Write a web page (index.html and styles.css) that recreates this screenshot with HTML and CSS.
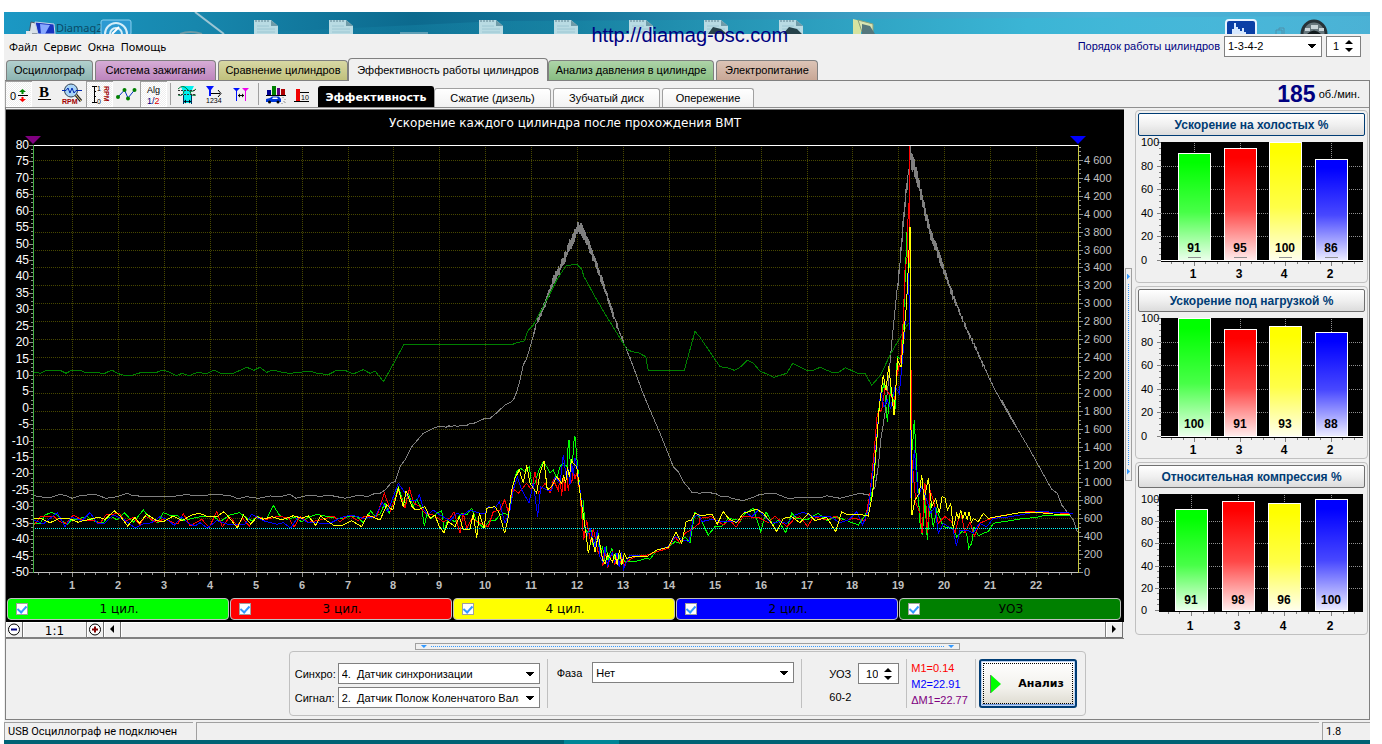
FILE: index.html
```html
<!DOCTYPE html>
<html lang="ru">
<head>
<meta charset="utf-8">
<title>Diamag</title>
<link rel="stylesheet" href="styles.css">
</head>
<body>
<div class="desktop">
  <svg class="desktop-art" viewBox="4 12 1366 22" aria-hidden="true">
    <defs>
      <linearGradient id="sky"><stop offset="0" stop-color="#1b98c4"/><stop offset=".14" stop-color="#1787ad"/><stop offset=".3" stop-color="#0c6a8e"/><stop offset=".42" stop-color="#17779c"/><stop offset=".62" stop-color="#3a9dc2"/><stop offset=".8" stop-color="#49b4d8"/><stop offset="1" stop-color="#49abd0"/></linearGradient>
      <linearGradient id="glow"><stop offset="0" stop-color="#1a93b8" stop-opacity="0"/><stop offset=".3" stop-color="#1789a6" stop-opacity=".6"/><stop offset=".7" stop-color="#3bb5d5"/><stop offset="1" stop-color="#4fc0e0" stop-opacity=".3"/></linearGradient>
      <g id="doc"><path d="M0 34V20H17L24 26V34Z" fill="#b9dbe3"/><path d="M17 20L24 26H17Z" fill="#6f9ba8"/><path d="M2 20v2M5 20v2M8 20v2M11 20v2M14 20v2" stroke="#5f8290"/><path d="M3 26H15M3 29H21M3 32H21" stroke="#9cc6d2"/></g>
    </defs>
    <rect x="4" y="12" width="1366" height="22" fill="url(#sky)"/>
    <path d="M230 34L500 21L1370 16V34Z" fill="url(#glow)"/>
    <path d="M195 12L224 34" stroke="#9dc6d4" stroke-width="2"/>
    <path d="M180 34Q190 30 202 34" stroke="#6e9aa6" fill="none" stroke-width="2"/>
    <text x="56" y="32" class="desktop-caption">Diamag2</text>
    <path d="M31 22L40 24V34H29Z" fill="#d8e0e8" stroke="#4a5662"/><path d="M35 22L54 24L55 34H38Z" fill="#1833c0" stroke="#c9d6ea"/><path d="M40 24L50 25L45 34H41Z" fill="#88a8ff"/><path d="M26 31h6v3h-6z" fill="#dfe6ea"/>
    <rect x="101" y="20" width="30" height="15" rx="2" fill="#2c9ad2" stroke="#8ad0ee"/><circle cx="116" cy="34" r="11" fill="none" stroke="#d6eef8" stroke-width="2"/><circle cx="116" cy="34" r="6" fill="none" stroke="#d6eef8" stroke-width="2"/><path d="M112 34L119 27" stroke="#fff" stroke-width="2"/>
    <use href="#doc" x="254"/><use href="#doc" x="329"/><path d="M400 32h28v2h-28z" fill="#5d9fb6"/>
    <use href="#doc" x="479"/><use href="#doc" x="554"/><use href="#doc" x="629"/><use href="#doc" x="704"/><use href="#doc" x="779"/>
    <path d="M708 34L713 27L721 29L727 34ZM783 34L789 27L797 29L802 34Z" fill="#26424a"/>
    <path d="M853 19L861 21V34H853Z" fill="#d7e3a0"/><path d="M858 20L873 24V32H862Z" fill="#d9e4b2" stroke="#8aa17c"/><path d="M862 24L870 26L875 34H862Z" fill="#55777c"/>
    <rect x="1226" y="20" width="30" height="18" rx="3" fill="#0b3fa6" stroke="#e9f4ff" stroke-width="2"/><path d="M1233 34V29M1235 34V23M1237 34V27M1239 34V29M1241 34V31M1243 34V28M1245 34V32" stroke="#d6e8ff" stroke-width="2"/>
    <path d="M1276 34V30H1282V34M1279 30V28H1284V34" stroke="#4f91ac" fill="none"/>
    <path d="M1302 34A12 13 0 0 1 1326 34" fill="#67777d" stroke="#263238" stroke-width="3"/><path d="M1305 28h5v3h-5zM1311 25h7v4h-7zM1319 28h5v3h-5z" fill="#c8d4d8"/><path d="M1307 34Q1314 27 1321 34Z" fill="#111a1d"/>
  </svg>
  <a class="site-link" href="http://diamag-osc.com">http://diamag-osc.com</a>
</div>

<div class="window">
  <header class="menubar">
    <nav class="menus"><button>Файл</button><button>Сервис</button><button>Окна</button><button>Помощь</button></nav>
    <div class="order">
      <label for="order">Порядок работы цилиндров</label>
      <select id="order" class="field order-select"><option>1-3-4-2</option></select>
      <span class="field spin"><input id="first" type="number" value="1" aria-label="Первый цилиндр"><svg viewBox="0 0 8 14" aria-hidden="true"><path d="M0 5L4 1L8 5ZM0 9L4 13L8 9Z"/></svg></span>
    </div>
  </header>

  <nav class="tabs">
    <button class="tab tab-scope">Осциллограф</button>
    <button class="tab tab-ignition">Система зажигания</button>
    <button class="tab tab-compare">Сравнение цилиндров</button>
    <button class="tab tab-active">Эффективность работы цилиндров</button>
    <button class="tab tab-pressure">Анализ давления в цилиндре</button>
    <button class="tab tab-power">Электропитание</button>
  </nav>

  <main class="page">
    <div class="toolbar">
      <div class="tools">
        <button class="tool pressed" aria-label="Сдвиг нуля"><svg viewBox="0 0 27 26"><text x="5" y="19" class="ic-text">0</text><path d="M17.500 8L21 11H18.500V13H16.500V11H14Z" fill="#080"/><path d="M13 14.500H23" stroke="#000"/><path d="M17.500 21L21 18H18.500V16H16.500V18H14Z" fill="red"/></svg></button>
        <button class="tool" aria-label="Жирные линии"><svg viewBox="0 0 27 26"><text x="7" y="16" class="ic-serif">B</text><path d="M6 18.500H19" stroke="#000"/></svg></button>
        <button class="tool" aria-label="Обороты"><svg viewBox="0 0 27 26"><circle cx="12" cy="9.500" r="6.500" fill="#a8d4f8" stroke="#345"/><path d="M3 9.500H7L9 7L11 12L13 7L15 12L17 9.500H23" fill="none" stroke="#0028b0"/><path d="M17 14L22 20" stroke="#222" stroke-width="3"/><path d="M17 14L22 20" stroke="#e8d080"/><text x="3" y="23" class="ic-rpm">RPM</text></svg></button>
        <button class="tool pressed" aria-label="Шкала оборотов"><svg viewBox="0 0 27 26"><path d="M6 5.500H11M8.500 5V22M6 21.500H11M8 10.500H10M8 15.500H10" stroke="#000" fill="none"/><text x="11" y="10" class="ic-tiny">1</text><text x="11" y="23" class="ic-tiny">0</text><text class="ic-rpm" transform="translate(18 5) rotate(90)">RPM</text></svg></button>
        <button class="tool" aria-label="Точки"><svg viewBox="0 0 27 26"><path d="M5 16L11.500 9L15 17L21.500 9" fill="none" stroke="#0030c0"/><g fill="#008000"><circle cx="5" cy="16" r="2"/><circle cx="11.500" cy="9" r="2"/><circle cx="15" cy="17.500" r="2"/><circle cx="21.500" cy="9" r="2"/></g></svg></button>
        <button class="tool pressed" aria-label="Алгоритм"><svg viewBox="0 0 27 26"><text x="7" y="12" class="ic-alg">Alg</text><text x="7" y="23" class="ic-alg ic-navy">1/<tspan fill="#e00000">2</tspan></text></svg></button>
        <i class="sep"></i>
        <button class="tool" aria-label="Датчик"><svg viewBox="0 0 27 26"><path d="M7 5H20L17 11V22H9V11Z" fill="#00f0f0"/><path d="M4 8Q9 3 13 8T22 8" fill="none" stroke="#007a30"/><path d="M4 14Q9 16 10 10M22 14Q17 16 16 10" fill="none" stroke="#007a30"/><path d="M4 9.500H22M4 13.500H22" stroke="#333" stroke-dasharray="2 1"/><path d="M9.500 14V23M17.500 14V23M10 20.500H17" stroke="#003060"/><path d="M10 20.500L12 18.500V22.500ZM17 20.500L15 18.500V22.500Z"/></svg></button>
        <button class="tool" aria-label="Маркер цилиндров"><svg viewBox="0 0 27 26"><path d="M5 5H13L10 9V15H8V9Z" fill="#0010ff"/><path d="M10 12.500H19M17 9L20 12.500L17 16" fill="none" stroke="#000"/><text x="5" y="22" class="ic-tiny">1234</text></svg></button>
        <button class="tool" aria-label="Маркеры"><svg viewBox="0 0 27 26"><path d="M5 7H12L9 10V20H8V10Z" fill="#0010ff"/><path d="M14 7H21L18 10V20H17V10Z" fill="#f000f0"/><path d="M10 14.500H16" stroke="#000"/><path d="M10 14.500L12 12.500V16.500ZM16 14.500L14 12.500V16.500Z"/></svg></button>
        <i class="sep"></i>
        <button class="tool" aria-label="Разгон"><svg viewBox="0 0 27 26"><path d="M5 9h4v5h-4z" fill="#000090"/><path d="M10 5h4v9h-4z" fill="#008000"/><path d="M15 7h3v7h-3z" fill="#600080"/><path d="M19 8h4v6h-4z" fill="#b00000"/><path d="M4 14.500H24" stroke="#000"/><path d="M4 18L8 17L10 15.500H17L19 18V21H4Z" fill="#0038d8"/><path d="M11 16.500H15L16 18H10Z" fill="#fff"/><circle cx="7.500" cy="21" r="1.500"/><circle cx="16" cy="21" r="1.500"/><path d="M21 16v1M23 18v1M23 21v1M20 22v1M22 20v1" stroke="#888"/></svg></button>
        <button class="tool" aria-label="Порог"><svg viewBox="0 0 27 26"><path d="M7 8h4v12h-4z" fill="#f00000"/><path d="M5 20.500H20M11 11.500H20" stroke="#000"/><text x="12" y="19" class="ic-tiny">10</text></svg></button>
      </div>
      <nav class="subtabs">
        <button class="subtab subtab-active">Эффективность</button>
        <button class="subtab">Сжатие (дизель)</button>
        <button class="subtab">Зубчатый диск</button>
        <button class="subtab">Опережение</button>
      </nav>
      <div class="rpm"><strong>185</strong><span>об./мин.</span></div>
    </div>

    <div class="workspace">
      <section class="chart">
        <svg id="plot" class="plot" viewBox="6 110 1118 488" role="img" aria-label="Ускорение каждого цилиндра"></svg>
        <div class="legend">
          <label class="series series-1"><input type="checkbox" checked><span>1 цил.</span></label>
          <label class="series series-3"><input type="checkbox" checked><span>3 цил.</span></label>
          <label class="series series-4"><input type="checkbox" checked><span>4 цил.</span></label>
          <label class="series series-2"><input type="checkbox" checked><span>2 цил.</span></label>
          <label class="series series-uoz"><input type="checkbox" checked><span>УОЗ</span></label>
        </div>
        <div class="zoombar">
          <button class="zb" aria-label="Уменьшить"><svg viewBox="0 0 16 15"><circle cx="8" cy="7.500" r="5.500" fill="#fff" stroke="#000"/><path d="M5 7.500H11" stroke="#000080" stroke-width="2"/></svg></button>
          <output class="ratio">1:1</output>
          <button class="zb" aria-label="Увеличить"><svg viewBox="0 0 16 15"><circle cx="8" cy="7.500" r="5.500" fill="#fff" stroke="#000"/><path d="M5 7.500H11M8 4.500V10.500" stroke="#800000" stroke-width="2"/></svg></button>
          <button class="zb" aria-label="Влево"><svg viewBox="0 0 16 15"><path d="M10 3V11L6 7Z"/></svg></button>
          <div class="track"></div>
          <button class="zb" aria-label="Вправо"><svg viewBox="0 0 16 15"><path d="M6 3V11L10 7Z"/></svg></button>
        </div>
      </section>
      <div class="vsplit"><div class="vgrip"><i class="tri-r"></i><i class="vdots"></i><i class="tri-r"></i></div></div>
      <aside class="side">
        <section class="card"><button class="card-title focus">Ускорение на холостых %</button><svg class="bars" data-chart="idle" viewBox="0 0 227 146"></svg></section>
        <section class="card"><button class="card-title">Ускорение под нагрузкой %</button><svg class="bars" data-chart="load" viewBox="0 0 227 146"></svg></section>
        <section class="card"><button class="card-title">Относительная компрессия %</button><svg class="bars" data-chart="compression" viewBox="0 0 227 146"></svg></section>
      </aside>
    </div>

    <div class="hgrip"><i class="tri-d"></i><i class="hdots"></i><i class="tri-d"></i></div>

    <form class="controls" onsubmit="return false">
      <div class="sources">
        <label for="sync">Синхро:</label>
        <select id="sync" class="field"><option>4.&nbsp; Датчик синхронизации</option></select>
        <label for="signal">Сигнал:</label>
        <select id="signal" class="field"><option>2.&nbsp; Датчик Полож Коленчатого Вала</option></select>
      </div>
      <i class="divider"></i>
      <div class="phase"><label for="phase">Фаза</label><select id="phase" class="field"><option>Нет</option></select></div>
      <i class="divider"></i>
      <div class="advance">
        <label for="uoz">УОЗ</label>
        <span class="field spin spin-wide"><input id="uoz" type="number" value="10"><svg viewBox="0 0 8 14" aria-hidden="true"><path d="M0 5L4 1L8 5ZM0 9L4 13L8 9Z"/></svg></span>
        <span>60-2</span>
      </div>
      <i class="divider"></i>
      <div class="marks"><span class="m1">M1=0.14</span><span class="m2">M2=22.91</span><span class="md">ΔM1=22.77</span></div>
      <i class="divider"></i>
      <button class="analyze"><svg viewBox="0 0 11 18" aria-hidden="true"><path d="M1 0L11 9L1 18Z" fill="#00ff00"/><path d="M.500 0V18" stroke="#707070"/></svg><span>Анализ</span></button>
    </form>
  </main>

  <footer class="status"><span class="st-main">USB Осциллограф не подключен</span><span class="st-fill"></span><span class="st-ver">1.8</span></footer>
</div>
<div class="taskbar"><i></i></div>
<script src="plot.js"></script>
</body>
</html>
```
FILE: styles.css
```css
* { box-sizing: border-box; }
body {
  margin: 0;
  min-height: 100vh;
  padding: 12px 12px 0 4px;
  display: flex;
  flex-direction: column;
  background: #fff;
  color: #000;
  font: 11px/14px "Liberation Sans", Arial, sans-serif;
}
button, select, input { font: inherit; color: inherit; margin: 0; padding: 0; border: 0; background: none; }
svg { display: block; }

.desktop { position: relative; }
.desktop-art { width: 100%; height: auto; }
.desktop-caption { font: 11px "Noto Sans", sans-serif; fill: #0b4a66; }
.site-link { position: absolute; left: 43%; top: 12px; font-size: 20px; line-height: 23px; color: #000080; text-decoration: none; }

.window { flex: 1; display: flex; flex-direction: column; background: #f0f0f0; }
.menubar { display: flex; justify-content: space-between; height: 24px; }
.menus { display: flex; gap: 6px; padding: 2px 5px; font: 11px/22px "Noto Sans", sans-serif; }
.order { display: flex; align-items: center; gap: 4px; padding-right: 9px; color: #000080; }

.field { height: 21px; border: 1px solid #808080; background-color: #fff; color: #000; border-radius: 0; }
select.field {
  appearance: none;
  padding: 0 20px 0 3px;
  background-image: linear-gradient(to bottom left, #000 50%, transparent 51%), linear-gradient(to bottom right, #000 50%, transparent 51%);
  background-size: 4px 4px;
  background-position: right 9px center, right 5px center;
  background-repeat: no-repeat;
}
.order-select { width: 98px; }
.spin { display: inline-flex; align-items: center; width: 35px; padding-right: 7px; }
.spin-wide { width: 41px; padding-right: 6px; }
.spin input { flex: 1; min-width: 0; text-align: right; padding-right: 6px; appearance: textfield; outline: 0; }
.spin input::-webkit-inner-spin-button { appearance: none; margin: 0; }
.spin svg { width: 8px; height: 14px; }

.tabs { display: flex; align-items: flex-end; height: 22px; padding-left: 2px; gap: 2px; }
.tab { height: 20px; border: 1px solid #808080; border-bottom: 0; border-radius: 4px 4px 0 0; line-height: 19px; white-space: nowrap; }
.tab-scope { width: 87px; background: linear-gradient(#b2d0ce, #8cb4b1); }
.tab-ignition { width: 121px; background: linear-gradient(#d6acd6, #bd85bd); }
.tab-compare { width: 130px; background: linear-gradient(#d8d8a4, #c0c07c); }
.tab-active { width: 200px; height: 23px; margin: 0 -2px -1px; background: #f0f0f0; z-index: 1; line-height: 20px; }
.tab-pressure { width: 166px; background: linear-gradient(#aed4a8, #88bd82); }
.tab-power { width: 102px; background: linear-gradient(#dcc4b6, #c8a796); }

.page { flex: 1; margin-left: 1px; border: 1px solid #808080; display: flex; flex-direction: column; margin-bottom: 2px; }
.toolbar { display: flex; align-items: stretch; height: 27px; border-bottom: 1px solid #909090; }
.tools { display: flex; align-items: center; margin-left: -1px; }
.tool { width: 27px; height: 26px; }
.tool svg { width: 27px; height: 26px; }
.pressed { background: repeating-conic-gradient(#fff 0 25%, #eee 0 50%) 0 0 / 2px 2px; box-shadow: inset 1px 1px #a0a0a0, inset -1px -1px #fff; }
.sep { width: 1px; height: 22px; margin: 0 3px; background: #a0a0a0; }
.ic-text { font: 11px "Liberation Sans", sans-serif; }
.ic-alg { font: 9px "Liberation Sans", sans-serif; }
.ic-navy { fill: #000080; }
.ic-serif { font: bold 15px "Liberation Serif", serif; }
.ic-rpm { font: bold 7px "Liberation Sans", sans-serif; fill: #a00000; }
.ic-tiny { font: 7px "Liberation Sans", sans-serif; }
.subtabs { display: flex; align-items: flex-end; gap: 2px; margin-left: 2px; }
.subtab { height: 19px; border: 1px solid #a0a0a0; border-bottom: 0; border-radius: 3px 3px 0 0; background: linear-gradient(#fff, #f2f2f2); }
.subtab:nth-child(2) { width: 117px; margin-left: -2px; }
.subtab:nth-child(3) { width: 107px; }
.subtab:nth-child(4) { width: 92px; }
.subtab-active { width: 116px; height: 21px; border-color: #000; background: #000; color: #fff; font: bold 11px "DejaVu Sans", sans-serif; }
.rpm { display: flex; align-items: center; gap: 3px; margin-left: auto; padding-right: 9px; }
.rpm strong { font-size: 23px; line-height: 26px; color: #000080; }

.workspace { display: flex; padding-top: 1px; }
.chart { flex: 1; min-width: 0; background: #000; border-top: 1px solid #707070; border-bottom: 1px solid #808080; }
.plot { width: 100%; height: auto; }
.title { font: 12px "DejaVu Sans", sans-serif; fill: #fff; }
.lab-left { font: 12px "Liberation Sans", sans-serif; fill: #fff; }
.lab-right { font: 11px "Liberation Sans", sans-serif; fill: #c0c0c0; }
.lab-x { font: bold 11px "Liberation Sans", sans-serif; fill: #c0c0c0; }
.crisp { shape-rendering: crispEdges; fill: none; }

.legend { display: flex; gap: 1px; height: 24px; padding: 0 3px 2px 1px; }
.series { flex: 1; display: flex; align-items: center; padding: 0 8px; border: 1px solid #c0c0c0; border-radius: 4px; font: 12px/20px "DejaVu Sans", sans-serif; }
.series span { flex: 1; text-align: center; padding-right: 10px; }
.series input { appearance: none; width: 12px; height: 12px; border: 1px solid #a0a0a0; background: #fff; display: grid; place-items: center; }
.series input:checked::after { content: ""; width: 4px; height: 7px; margin-bottom: 2px; border: solid #3399ff; border-width: 0 2px 2px 0; transform: rotate(42deg); }
.series-1 { background: #00ff00; }
.series-3 { background: #ff0000; }
.series-4 { background: #ffff00; }
.series-2 { background: #0000ff; }
.series-uoz { background: #008000; }

.zoombar { display: flex; height: 16px; background: #f0f0f0; padding-right: 1px; }
.zb { width: 17px; border: solid; border-width: 0 1px 1px 0; border-color: #707070; box-shadow: inset 1px 1px #fff; }
.zb svg { width: 16px; height: 15px; }
.ratio { width: 64px; border: solid #808080; border-width: 0 1px 1px 0; box-shadow: inset 1px 1px #fff; text-align: center; font: 12px/19px "DejaVu Sans", sans-serif; overflow: hidden; }
.track { flex: 1; border: solid #808080; border-width: 0 1px 1px 0; box-shadow: inset 1px 1px #fff; }

.vsplit { width: 11px; display: flex; align-items: center; padding-left: 1px; }
.vgrip { width: 7px; height: 213px; border: 1px solid #a0a0a0; display: flex; flex-direction: column; align-items: center; padding: 5px 0; gap: 4px; }
.vdots { flex: 1; border-left: 1px dotted #3399ff; }
.hdots { flex: 1; border-top: 1px dotted #3399ff; }
.tri-r { width: 3px; height: 6px; background: #3399ff; clip-path: polygon(0 0, 100% 50%, 0 100%); }
.tri-d { width: 6px; height: 3px; background: #3399ff; clip-path: polygon(0 0, 100% 0, 50% 100%); }
.hgrip { width: 40%; height: 7px; margin: 4px auto 0; border: 1px solid #a0a0a0; display: flex; align-items: center; padding: 0 5px; gap: 4px; }

.side { width: 234px; display: flex; flex-direction: column; gap: 3px; padding: 1px 1px 0 0; }
.card { border: 1px solid #c0c0c0; border-radius: 4px; padding: 2px 2px 0; }
.card-title { display: block; width: 100%; height: 23px; border: 1px solid #707070; border-radius: 2px; background: linear-gradient(#fff, #f0f0f0 50%, #dcdcdc); color: #003c74; font-weight: bold; font-size: 12px; }
.focus { border-color: #003c74; }
.bars { width: 100%; height: auto; }
.bar-scale { font: 11px "Liberation Sans", sans-serif; }
.bar-value { font: bold 12px "Liberation Sans", sans-serif; text-anchor: middle; }

.controls { display: flex; align-items: center; height: 65px; margin: 1px auto 0; padding: 0 8px 0 5px; border: 1px solid #c0c0c0; border-radius: 4px; }
.sources { display: grid; grid-template-columns: 39px 202px; gap: 3px 4px; align-items: center; padding-top: 4px; }
.divider { width: 1px; height: 49px; background: #c0c0c0; margin: 0 4px 0 7px; }
.phase { display: flex; align-items: center; gap: 10px; align-self: flex-start; padding: 10px 0 0 5px; }
.phase select { width: 202px; }
.advance { display: grid; grid-template-columns: 25px 41px; gap: 6px 4px; align-items: center; padding-left: 23px; }
.marks { display: flex; flex-direction: column; line-height: 16px; width: 60px; white-space: nowrap; }
.m1 { color: #f00; }
.m2 { color: #00f; }
.md { color: #800080; }
.controls .marks + .divider { margin: 0 3px 0 4px; }
.analyze { display: flex; align-items: center; gap: 17px; width: 98px; height: 49px; padding-left: 9px; border: 2px solid #003c74; border-radius: 3px; background: linear-gradient(#fff, #f2f1ec 60%, #dcd9ce); box-shadow: inset 0 0 0 1px #bcd4f6, inset 0 -2px #6f9be0; outline: 1px dotted #000; outline-offset: -5px; font: bold 11px "DejaVu Sans", sans-serif; }
.analyze svg { width: 11px; height: 18px; }

.status { display: flex; height: 18px; gap: 3px; font: 11px/17px Roboto, sans-serif; }
.status span { border: solid #a0a0a0; border-width: 1px 0 0 1px; padding-left: 3px; }
.st-main { width: 189px; white-space: nowrap; }
.st-fill { flex: 1; }
.st-ver { width: 48px; }
.taskbar { height: 4px; background: #006274; }
.taskbar i { display: block; width: 4%; height: 4px; margin-left: 41%; background: #008596; }
```
FILE: plot.js
```js
const NS = 'http://www.w3.org/2000/svg';
function add(parent, tag, attrs, text) {
  const el = document.createElementNS(NS, tag);
  for (const k in attrs) el.setAttribute(k, attrs[k]);
  if (text !== undefined) el.textContent = text;
  parent.appendChild(el);
  return el;
}

const plot = document.getElementById('plot');
const L = 33, R = 1078, T = 145, B = 572;
const xAt = t => Math.round(26.2 + 45.905 * t) + 0.5;
const yLeft = v => Math.round(B - (v + 50) * 427 / 130) + 0.5;
const yRight = v => Math.round(B - v * 0.08957) + 0.5;

let grid = '';
for (let t = 1; t <= 22; t++) grid += `M${xAt(t)} ${T}V${B}`;
for (let v = 200; v <= 4600; v += 200) grid += `M${L} ${yRight(v)}H${R}`;
add(plot, 'path', { d: grid, class: 'crisp', stroke: '#484800', 'stroke-dasharray': '1 1' });

// Recorded blocks: an origin and samples at three per pixel.
// A sample [x, y, amp, step] is reached with a ripple of that amplitude.
let seed = 7;
const rnd = () => (seed = (seed * 16807) % 2147483647) / 2147483647;
function trace(color, blocks) {
  const pts = [];
  let last = null, sign = 1;
  for (const [ox, oy, samples] of blocks) {
    for (const [sx, sy, amp, step] of samples) {
      const x = ox + sx / 3, y = oy + sy / 3;
      if (amp && last) {
        const n = Math.max(1, Math.round((x - last[0]) * 3 / step));
        for (let k = 1; k < n; k++) {
          sign = -sign;
          pts.push([last[0] + (x - last[0]) * k / n, last[1] + (y - last[1]) * k / n + sign * (0.3 + 0.7 * rnd()) * amp / 3]);
        }
      }
      pts.push([x, y]);
      last = [x, y];
    }
  }
  add(plot, 'polyline', { points: pts.map(p => p[0].toFixed(1) + ',' + p[1].toFixed(1)).join(' '), class: 'crisp', stroke: color });
}

trace('#808080', [
  [0, 400, [[102,287],[125,291],[155,291],[180,283],[200,288],[217,295],[240,287],[285,283],[318,295],[350,290],[380,280],[400,287],[450,290],[480,291],[515,290],[555,284],[600,287],[650,283],[690,287],[715,296],[740,290],[775,295],[810,288],[845,289],[870,283],[888,295],[925,286],[960,289],[990,286],[1035,295],[1065,288],[1085,286],[1100,291],[1125,280],[1140,280],[1155,270],[1170,253]]],
  [380, 200, [[30,850],[45,845],[60,800],[75,780],[95,740],[130,700],[165,682],[180,680],[250,677,3,9],[290,666,3,9],[315,655],[330,655],[345,643],[375,615],[395,605],[403,595],[412,570],[420,540],[430,495],[440,475],[455,425],[470,370,6,2],[500,300,10,1],[520,245,14,1],[540,205,16,1],[560,160,18,1],[585,100,20,1],[595,78,20,1],[605,90,20,1],[620,120,18,1],[640,170,16,1],[660,225,15,1],[680,285,14,1],[700,345,12,1],[720,400,8,2],[740,450,6,2],[760,500,5,3],[785,570],[810,630],[840,700],[870,775],[880,800],[895,815],[910,845],[935,875]]],
  [640, 300, [[155,577],[180,580],[190,577],[225,580],[245,590],[260,588],[275,595],[310,602],[340,592],[360,583],[405,580],[448,597],[470,592],[545,592],[560,587],[600,595],[630,587],[660,580],[690,586],[705,560],[715,500],[722,420],[735,340],[745,250],[755,130],[768,0]]],
  [820, 130, [[228,510],[240,400,15,2],[252,250,18,1],[262,150,22,1],[268,110],[271,45],[273,90],[285,120,30,1],[300,180,26,1],[315,245,22,1],[330,305,20,1],[350,360,18,1],[375,430,16,1],[400,500,12,1],[430,575,9,2],[460,640,8,2],[490,705,7,2],[520,770,4,3],[550,825],[590,895]]],
  [820, 400, [[545,0],[570,45],[600,100],[630,150],[660,205],[695,268],[712,280],[725,315],[745,340],[760,360],[772,395]]]
]);

trace('#008000', [
  [0, 110, [[102,787],[122,790],[138,781],[180,781],[198,790],[215,781],[240,781],[255,787],[285,788],[315,790],[335,780],[352,790],[375,797],[400,795],[425,787],[470,787],[490,780],[510,787],[528,797],[547,790],[567,797],[590,788],[622,790],[643,780],[662,790],[700,790],[740,772],[762,781],[780,772],[800,787],[820,780],[850,788],[870,790],[900,787],[930,783],[950,790],[985,794],[1010,781],[1035,781],[1060,792],[1090,779],[1110,790],[1125,783]]],
  [380, 200, [[0,532],[10,545],[30,510],[72,433],[398,433],[410,428],[432,424],[445,390],[458,378],[500,300],[530,240],[558,197],[590,193],[605,208],[612,230],[645,290],[680,350],[740,447],[755,455],[775,458],[797,470],[805,511],[913,511],[945,394],[960,412]]],
  [640, 300, [[240,200],[262,203],[283,211],[300,202],[322,181],[340,190],[360,213],[402,232],[440,220],[458,190],[500,211],[520,211],[540,202],[575,217],[595,217],[617,203],[650,219],[675,220],[695,256],[722,225],[750,165],[805,70]]]
]);

trace('#00ff00', [
  [0, 400, [[102,370],[120,372],[135,345],[155,337],[172,345],[185,362],[200,374],[215,360],[240,355],[262,350],[285,365],[310,368],[320,355],[335,350],[352,360],[373,338],[400,367],[430,330],[455,362],[475,368],[490,338],[508,345],[530,345],[550,362],[570,357],[600,350],[640,348],[660,365],[690,345],[718,338],[735,350],[755,362],[775,350],[800,357],[820,316],[838,345],[860,358],[885,352],[905,365],[925,352],[950,343],[985,350],[1020,357],[1045,350],[1070,348],[1090,368],[1112,332],[1125,350],[1140,342],[1155,310],[1168,340],[1180,310],[1195,262],[1215,320],[1225,280],[1240,320],[1250,300]]],
  [380, 200, [[125,925],[133,978],[140,945],[155,955],[170,940],[185,932],[193,990],[205,955],[225,965],[245,940],[260,945],[275,925],[290,965],[312,985],[330,960],[345,962],[360,945],[375,940],[385,945],[392,900],[400,850],[410,815],[422,805],[435,815],[448,800],[455,850],[465,850],[475,815],[490,785],[500,800],[510,820],[520,810],[530,835],[540,800],[550,790],[562,800],[565,720],[568,720],[571,800],[578,780],[583,710],[585,710],[592,790],[600,870],[607,960],[610,900],[615,985],[625,1000],[632,985],[640,1040],[655,1000],[662,1060],[690,1060,25,6],[735,1085,18,6],[765,1085],[800,1075],[810,1078],[830,1050],[865,1042],[885,1025],[900,1030],[915,1010],[930,1028],[945,935],[958,950]]],
  [640, 300, [[185,665],[205,705],[225,680],[245,680],[265,655],[290,660],[300,665],[315,640],[340,625],[362,695],[378,635],[400,675],[415,660],[437,698],[455,640],[470,655],[500,660],[535,640],[560,662],[590,650],[615,660],[655,675],[672,650],[685,625],[700,560],[710,430],[718,310],[732,250],[742,365],[752,260],[765,330],[772,170],[785,180],[793,0]]],
  [820, 130, [[253,510],[262,285],[266,450],[270,300],[273,730],[274,900]]],
  [820, 400, [[277,150],[283,60],[290,200],[300,370],[307,405],[315,300],[322,420],[330,310],[340,380],[350,330],[370,380],[400,385],[410,410],[425,395],[440,400],[446,445],[455,430],[462,380],[475,408],[490,400],[505,395],[520,370],[550,365],[600,357],[650,352],[680,345],[750,345]]]
]);

trace('#ff0000', [
  [0, 400, [[102,376],[122,348],[160,348],[180,365],[200,370],[220,345],[250,362],[280,360],[300,370],[318,345],[358,340],[375,365],[400,352],[420,375],[435,348],[470,367],[495,355],[520,368],[533,372],[550,340],[570,378],[605,358],[628,382],[650,335],[667,380],[690,350],[712,378],[728,355],[748,378],[770,350],[800,358],[830,350],[865,352],[882,382],[900,350],[925,367],[960,360],[1000,348],[1020,365],[1045,345],[1075,362],[1095,348],[1130,350],[1153,280],[1172,332],[1195,270],[1215,325],[1228,265],[1242,310],[1258,318]]],
  [380, 200, [[135,940],[160,945],[190,965],[210,955],[222,935],[240,1000],[250,940],[260,985],[275,955],[300,970],[325,980],[340,935],[360,930],[374,900],[385,935],[398,865],[415,880],[440,850],[455,870],[465,815],[475,880],[495,850],[510,880],[520,840],[535,870],[590,820,35,5],[600,880],[611,1020],[620,960],[632,1030],[640,985],[655,1060],[690,1075,35,7],[740,1085,20,7],[765,1070],[800,1065],[830,1055],[865,1045],[885,1010],[900,1030],[915,1000],[940,985],[958,970]]],
  [640, 300, [[180,655],[215,650],[250,675],[270,660],[288,682],[308,650],[355,652],[385,668],[405,648],[440,680],[465,655],[480,650],[503,680],[520,650],[560,660],[585,648],[610,665],[640,655],[675,662],[690,580],[702,460],[712,340],[725,330],[735,265],[755,290],[762,320],[772,220],[782,180],[790,60]]],
  [820, 130, [[255,420],[262,380],[265,220],[268,220],[268,50],[269,50],[269,400],[271,290],[273,720]]],
  [820, 400, [[276,180],[288,310],[300,340],[306,400],[315,250],[322,400],[330,270],[340,300],[355,370],[375,350],[395,365],[405,400],[422,332],[435,400],[450,365],[463,408],[480,370],[500,360],[530,350],[570,343],[620,335],[700,337],[750,342]]]
]);

trace('#0000ff', [
  [0, 400, [[102,360],[130,372],[150,355],[172,338],[195,380],[215,352],[245,362],[270,338],[292,370],[315,370],[340,345],[370,357],[405,384],[430,372],[455,368],[480,350],[500,358],[523,376],[545,350],[565,370],[585,378],[600,368],[622,384],[650,362],[680,372],[705,372],[735,372],[755,343],[790,362],[830,373],[850,368],[872,384],[895,350],[925,368],[990,370],[1025,352],[1055,345],[1090,355],[1125,352],[1147,308],[1163,335],[1195,250],[1230,300],[1250,302],[1258,285]]],
  [380, 200, [[132,930],[145,945],[160,930],[180,945],[210,962],[230,940],[250,945],[270,930],[300,940],[315,940],[325,920],[345,925],[358,905],[375,970],[390,930],[400,870],[412,830],[425,870],[447,908],[460,850],[473,950],[482,860],[500,870],[515,870],[525,830],[540,850],[550,765],[560,840],[590,790,35,5],[600,870],[612,960],[620,1010],[630,985],[645,1040],[652,990],[660,1070],[690,1070,35,7],[738,1090,28,7],[750,1065],[800,1070],[830,1050],[865,1040],[885,1010],[910,1020],[928,1025],[940,950],[958,945]]],
  [640, 300, [[185,665],[215,658],[245,665],[290,665],[315,635],[335,650],[355,630],[375,650],[395,670],[420,665],[440,670],[465,645],[490,637],[520,650],[570,650],[600,668],[625,660],[650,635],[668,675],[685,630],[697,530],[705,470],[722,275],[732,320],[742,300],[752,325],[765,260],[778,280],[790,150],[800,0]]],
  [820, 130, [[262,480],[266,380],[268,600],[270,500],[271,800]]],
  [820, 400, [[273,295],[283,150],[295,290],[305,260],[320,300],[332,340],[345,320],[355,400],[370,370],[400,390],[409,438],[420,390],[440,390],[460,400],[478,370],[500,380],[520,355],[560,352],[600,345],[650,335],[720,337],[760,340]]]
]);

trace('#ffff00', [
  [0, 400, [[102,357],[120,355],[150,368],[180,355],[205,355],[235,367],[250,362],[270,358],[295,352],[315,358],[343,332],[362,350],[383,378],[405,352],[418,370],[440,343],[470,362],[490,365],[520,348],[545,362],[575,345],[597,340],[625,350],[650,350],[672,335],[695,362],[712,384],[730,345],[752,372],[772,350],[790,358],[815,350],[845,360],[880,347],[905,355],[925,348],[947,376],[962,348],[980,362],[1000,375],[1030,375],[1055,362],[1085,380],[1103,345],[1140,360],[1160,315],[1178,330],[1195,265],[1210,322],[1218,272],[1235,318],[1245,328],[1258,328]]],
  [380, 200, [[135,920],[150,955],[165,945],[178,980],[192,998],[205,965],[225,980],[238,950],[250,990],[270,988],[280,940],[290,1015],[298,940],[312,985],[320,925],[345,920],[358,940],[374,1000],[385,950],[395,870],[405,835],[418,810],[430,850],[440,795],[450,850],[470,880],[480,820],[492,782],[502,870],[515,860],[530,830],[545,850],[580,790,28,6],[590,800],[600,880],[612,960],[618,1000],[625,1060],[635,1010],[645,1055],[655,1005],[668,1080],[690,1075,30,7],[740,1075,26,7],[760,1070],[800,1070],[830,1050],[865,1042],[888,995],[905,1030],[918,965],[935,960],[945,940],[958,945]]],
  [640, 300, [[180,648],[215,642],[232,672],[250,635],[268,658],[290,668],[310,640],[350,628],[370,640],[395,670],[410,695],[430,655],[455,650],[480,668],[505,640],[525,662],[560,652],[587,695],[605,635],[625,645],[655,642],[685,648],[698,580],[708,450],[718,320],[730,225],[738,270],[746,197],[762,345],[773,180],[783,200],[798,30]]],
  [820, 130, [[262,480],[270,290],[271,500],[273,900]]],
  [820, 400, [[276,345],[285,300],[298,280],[305,225],[312,300],[325,235],[335,320],[347,295],[358,340],[366,290],[376,295],[382,330],[392,310],[400,385],[410,340],[460,355,25,6],[475,365],[490,340],[505,355],[530,350],[560,345],[600,338],[660,338],[700,342],[750,345]]]
]);

add(plot, 'path', { d: `M${L} 528.5H${R}`, class: 'crisp', stroke: '#00ffff', 'stroke-dasharray': '1 1' });

let ticks = '';
for (let i = 0; i <= 104; i++) ticks += `M${i % 4 ? 31 : 29} ${yLeft(-50 + i * 1.25)}H33`;
for (let v = 0; v <= 4750; v += 50) ticks += `M1079 ${yRight(v)}H${v % 200 ? 1081 : 1083}`;
for (let i = 1; i <= 91; i++) ticks += `M${xAt(i / 4)} 573V${i % 4 ? 575 : 577}`;
add(plot, 'path', { d: ticks, class: 'crisp', stroke: '#909090' });
add(plot, 'path', { d: `M${L} 145.5H${R}`, class: 'crisp', stroke: '#fff' });
add(plot, 'path', { d: `M${L} 572.5H${R}`, class: 'crisp', stroke: '#c0c0c0' });
add(plot, 'path', { d: `M33.5 145V573`, class: 'crisp', stroke: '#44b044' });
add(plot, 'path', { d: `M1078.5 145V573`, class: 'crisp', stroke: '#c8c840' });
add(plot, 'path', { d: 'M25 136H41L33 144Z', fill: '#800080' });
add(plot, 'path', { d: 'M1070 136H1086L1078 144Z', fill: '#0000ff' });

add(plot, 'text', { x: 565, y: 127, class: 'title', 'text-anchor': 'middle' }, 'Ускорение каждого цилиндра после прохождения ВМТ');
for (let v = -50; v <= 80; v += 5) add(plot, 'text', { x: 29, y: Math.round(yLeft(v)) + 3, class: 'lab-left', 'text-anchor': 'end' }, v);
for (let v = 0; v <= 4600; v += 200) {
  const s = v >= 1000 ? Math.floor(v / 1000) + ' ' + String(v % 1000).padStart(3, '0') : String(v);
  add(plot, 'text', { x: 1084, y: Math.round(yRight(v)) + 3, class: 'lab-right' }, s);
}
for (let t = 1; t <= 22; t++) add(plot, 'text', { x: Math.floor(xAt(t)), y: 589, class: 'lab-x', 'text-anchor': 'middle' }, t);

const colors = ['#00ff00', '#ff0000', '#ffff00', '#0000ff'];
const names = ['1', '3', '4', '2'];
const charts = {
  idle: { values: [91, 95, 100, 86], left: 23, top: 6, zero: 124, bars: [40, 86, 131, 177], marks: true },
  load: { values: [100, 91, 93, 88], left: 23, top: 6, zero: 124, bars: [40, 86, 131, 177] },
  compression: { values: [91, 98, 96, 100], left: 21, top: 11, zero: 122, bars: [37, 84, 130, 177] }
};
for (const svg of document.querySelectorAll('.bars')) {
  const c = charts[svg.dataset.chart];
  const yv = v => Math.round(c.zero - v * (c.zero - c.top) / 100);
  const defs = add(svg, 'defs', {});
  add(svg, 'rect', { x: c.left, y: 6, width: 225 - c.left, height: c.zero - 4, fill: '#000' });
  let g = '';
  for (let v = 20; v <= 80; v += 20) g += `M${c.left} ${yv(v) + 0.5}H225`;
  for (const b of c.bars) g += `M${b + 16.5} 7V${c.zero}`;
  add(svg, 'path', { d: g, class: 'crisp', stroke: '#909090', 'stroke-dasharray': '1 1' });
  let t = '';
  for (let v = 0; v <= 100; v += 5) t += `M${v % 20 ? c.left - 2 : c.left - 4} ${yv(v) + 0.5}H${c.left}`;
  const stepX = (c.bars[3] - c.bars[0]) / 12;
  for (let i = -2; i <= 14; i++) t += `M${Math.round(c.bars[0] + 16 + i * stepX) + 0.5} ${c.zero + 2}V${((i % 4) + 4) % 4 ? c.zero + 4 : c.zero + 6}`;
  add(svg, 'path', { d: t, class: 'crisp', stroke: '#808080' });
  if (c.left === 23) add(svg, 'path', { d: `M${c.left} ${c.zero + 0.5}H225`, class: 'crisp', stroke: '#fff' });
  for (let v = 0; v <= 100; v += 20) add(svg, 'text', { x: 3, y: yv(v) + 4, class: 'bar-scale' }, v);
  c.values.forEach((v, i) => {
    const id = svg.dataset.chart + i;
    const lg = add(defs, 'linearGradient', { id, x2: 0, y2: 1 });
    add(lg, 'stop', { offset: 0.08, 'stop-color': colors[i] });
    add(lg, 'stop', { offset: 0.55, 'stop-color': colors[i], 'stop-opacity': 0.72 });
    add(lg, 'stop', { offset: 1, 'stop-color': colors[i], 'stop-opacity': 0.08 });
    const y = yv(v), x = c.bars[i];
    add(svg, 'rect', { x, y, width: 33, height: c.zero - y + 1, fill: '#fff' });
    add(svg, 'rect', { x: x + 1, y: y + 1, width: 31, height: c.zero - y - 1, fill: `url(#${id})` });
    if (c.marks) add(svg, 'path', { d: `M${x + 10} 121.5H${x + 23}`, class: 'crisp', stroke: '#909090' });
    add(svg, 'text', { x: x + 16, y: 116, class: 'bar-value' }, v);
    add(svg, 'text', { x: x + 15, y: 142, class: 'bar-value' }, names[i]);
  });
}
```
